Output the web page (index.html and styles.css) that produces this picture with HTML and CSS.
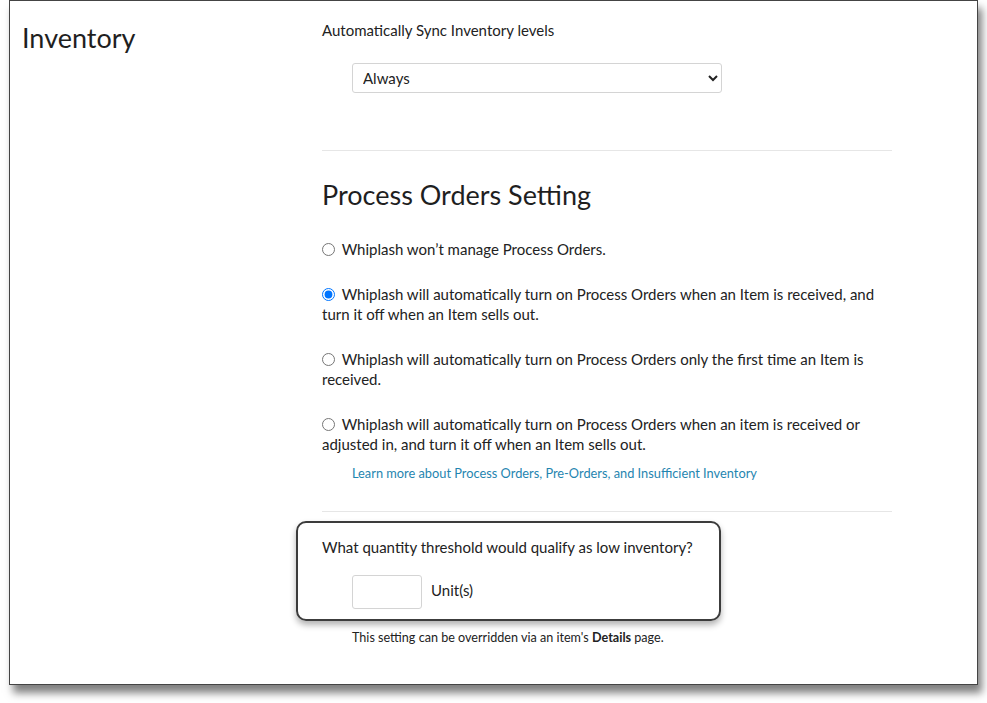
FILE: index.html
```html
<!DOCTYPE html>
<html lang="en">
<head>
<meta charset="utf-8">
<title>Inventory settings</title>
<link rel="stylesheet" href="styles.css">
</head>
<body>
<div class="panel">
  <div class="side">
    <h1 class="side-title">Inventory</h1>
  </div>
  <div class="main">
    <p class="field-label">Automatically Sync Inventory levels</p>
    <select class="sync-select">
      <option>Always</option>
      <option>Never</option>
    </select>

    <hr class="divider divider-first">

    <h2 class="section-title">Process Orders Setting</h2>
    <ul class="options">
      <li class="option"><label><input type="radio" name="po" class="radio"> Whiplash won’t manage Process Orders.</label></li>
      <li class="option"><label><input type="radio" name="po" class="radio" checked> Whiplash will automatically turn on Process Orders when an Item is received, and turn it off when an Item sells out.</label></li>
      <li class="option"><label><input type="radio" name="po" class="radio"> Whiplash will automatically turn on Process Orders only the first time an Item is received.</label></li>
      <li class="option"><label><input type="radio" name="po" class="radio"> Whiplash will automatically turn on Process Orders when an item is received or adjusted in, and turn it off when an Item sells out.</label></li>
    </ul>
    <a class="learn-link" href="#">Learn more about Process Orders, Pre-Orders, and Insufficient Inventory</a>

    <hr class="divider divider-second">

    <div class="threshold">
      <p class="field-label">What quantity threshold would qualify as low inventory?</p>
      <div class="threshold-row">
        <input type="text" class="qty-input">
        <span class="unit">Unit(s)</span>
      </div>
    </div>
    <p class="note">This setting can be overridden via an item's <strong>Details</strong> page.</p>
  </div>
</div>
</body>
</html>
```

FILE: styles.css
```css
html, body {
  margin: 0;
  padding: 0;
  background: #ffffff;
}

body {
  font-family: Lato, "Open Sans", "Liberation Sans", sans-serif;
  color: #222222;
  min-height: 703px;
}

.panel {
  box-sizing: border-box;
  width: 969px;
  height: 685px;
  margin-left: 9px;
  padding: 19px 0 0 12px;
  border: 1px solid #444444;
  background: #ffffff;
  box-shadow: 4px 8px 8px rgba(0, 0, 0, 0.5);
  display: grid;
  grid-template-columns: 300px 570px;
  align-items: start;
}

.side-title {
  margin: 1px 0 0;
  font-size: 27px;
  line-height: 34px;
  font-weight: 400;
  color: #1f1f1f;
}

.main {
  display: flex;
  flex-direction: column;
  align-items: flex-start;
}

.field-label {
  margin: 0;
  font-size: 15px;
  line-height: 20px;
}

.sync-select {
  box-sizing: border-box;
  width: 370px;
  height: 30px;
  margin: 23px 0 0 30px;
  padding: 0 6px;
  font-family: inherit;
  font-size: 15px;
  color: #222222;
  background: #ffffff;
  border: 1px solid #d4d4d4;
  border-radius: 3px;
}

.divider {
  align-self: stretch;
  height: 0;
  margin: 0;
  border: 0;
  border-top: 1px solid #e6e6e6;
}

.divider-first {
  margin-top: 57px;
}

.divider-second {
  margin-top: 29px;
}

.section-title {
  margin: 27px 0 0;
  font-size: 27px;
  line-height: 34px;
  font-weight: 400;
  color: #1f1f1f;
}

.options {
  list-style: none;
  margin: 27px 0 0;
  padding: 0;
  display: flex;
  flex-direction: column;
  gap: 25px;
}

.option {
  font-size: 15px;
  line-height: 20px;
}

.radio {
  width: 13px;
  height: 13px;
  margin: 0 3px 0 0;
  vertical-align: -1px;
}

.learn-link {
  margin: 10px 0 0 30px;
  font-size: 12.8px;
  line-height: 18px;
  color: #1f85b0;
  text-decoration: none;
}

.threshold {
  box-sizing: border-box;
  width: 425px;
  margin: 9px 0 0 -26px;
  padding: 14px 0 10px 24px;
  border: 2px solid #3c3c3c;
  border-radius: 10px;
  box-shadow: 0 4px 6px rgba(0, 0, 0, 0.3);
}

.threshold-row {
  display: flex;
  align-items: flex-start;
  gap: 9px;
  margin: 18px 0 0 30px;
}

.qty-input {
  box-sizing: border-box;
  width: 70px;
  height: 34px;
  margin: 0;
  padding: 0 6px;
  font-family: inherit;
  font-size: 15px;
  border: 1px solid #d4d4d4;
  border-radius: 3px;
}

.unit {
  margin-top: 5px;
  font-size: 15px;
  line-height: 20px;
}

.note {
  margin: 8px 0 0 30px;
  font-size: 12.6px;
  line-height: 18px;
  color: #222222;
}

.note strong {
  font-weight: 700;
}
```
